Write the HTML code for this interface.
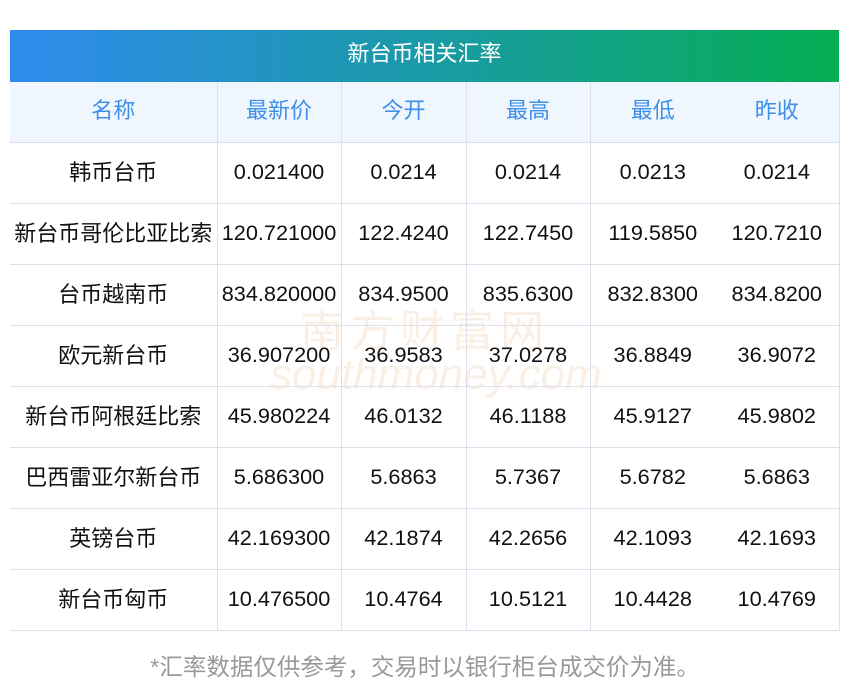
<!DOCTYPE html>
<html><head><meta charset="utf-8"><style>
body{margin:0;background:#fff;width:850px;height:697px;position:relative;overflow:hidden;font-family:"Liberation Sans","Noto Sans CJK SC",sans-serif;}
.title{position:absolute;left:10px;top:30px;width:829px;height:52px;background:linear-gradient(90deg,#2f8bee,#1a9aa6 50%,#05ae52);color:#fff;font-size:22px;line-height:48px;text-align:center;}
table{position:absolute;left:10px;top:82px;width:829px;border-collapse:collapse;table-layout:fixed;}
td{height:61px;box-sizing:border-box;border-bottom:1px solid #dde0ec;text-align:center;font-size:21.7px;line-height:24px;color:#111;padding:0 0 2px 0;white-space:nowrap;}
td.n{padding-bottom:0;font-size:22px;}
tr.h td{background:#f0f6fe;color:#3d8fe8;padding-bottom:2px;font-size:22px;height:60px;}
td.b{border-right:1px solid #dde0ec;}
td.last{border-right:1px solid #dde0ec;}
.foot{position:absolute;top:648px;left:0;width:850px;text-align:center;font-size:23.5px;color:#999;}
.wm{position:absolute;color:rgba(235,190,150,0.25);font-size:44px;}
</style></head><body>
<div class="title">新台币相关汇率</div>
<div class="wm" style="left:300px;top:295px;letter-spacing:6px;">南方财富网</div>
<div class="wm" style="left:270px;top:350px;font-style:italic;">southmoney.com</div>
<table>
<colgroup><col style="width:207px"><col style="width:124px"><col style="width:125px"><col style="width:124px"><col style="width:125px"><col style="width:124px"></colgroup>
<tr class="h"><td class="b">名称</td><td class="b">最新价</td><td class="b">今开</td><td class="b">最高</td><td>最低</td><td class="last">昨收</td></tr>
<tr><td class="b n">韩币台币</td><td class="b">0.021400</td><td class="b">0.0214</td><td class="b">0.0214</td><td>0.0213</td><td class="last">0.0214</td></tr>
<tr><td class="b n">新台币哥伦比亚比索</td><td class="b">120.721000</td><td class="b">122.4240</td><td class="b">122.7450</td><td>119.5850</td><td class="last">120.7210</td></tr>
<tr><td class="b n">台币越南币</td><td class="b">834.820000</td><td class="b">834.9500</td><td class="b">835.6300</td><td>832.8300</td><td class="last">834.8200</td></tr>
<tr><td class="b n">欧元新台币</td><td class="b">36.907200</td><td class="b">36.9583</td><td class="b">37.0278</td><td>36.8849</td><td class="last">36.9072</td></tr>
<tr><td class="b n">新台币阿根廷比索</td><td class="b">45.980224</td><td class="b">46.0132</td><td class="b">46.1188</td><td>45.9127</td><td class="last">45.9802</td></tr>
<tr><td class="b n">巴西雷亚尔新台币</td><td class="b">5.686300</td><td class="b">5.6863</td><td class="b">5.7367</td><td>5.6782</td><td class="last">5.6863</td></tr>
<tr><td class="b n">英镑台币</td><td class="b">42.169300</td><td class="b">42.1874</td><td class="b">42.2656</td><td>42.1093</td><td class="last">42.1693</td></tr>
<tr><td class="b n">新台币匈币</td><td class="b">10.476500</td><td class="b">10.4764</td><td class="b">10.5121</td><td>10.4428</td><td class="last">10.4769</td></tr>
</table>
<div class="foot">*汇率数据仅供参考，交易时以银行柜台成交价为准。</div>
</body></html>
